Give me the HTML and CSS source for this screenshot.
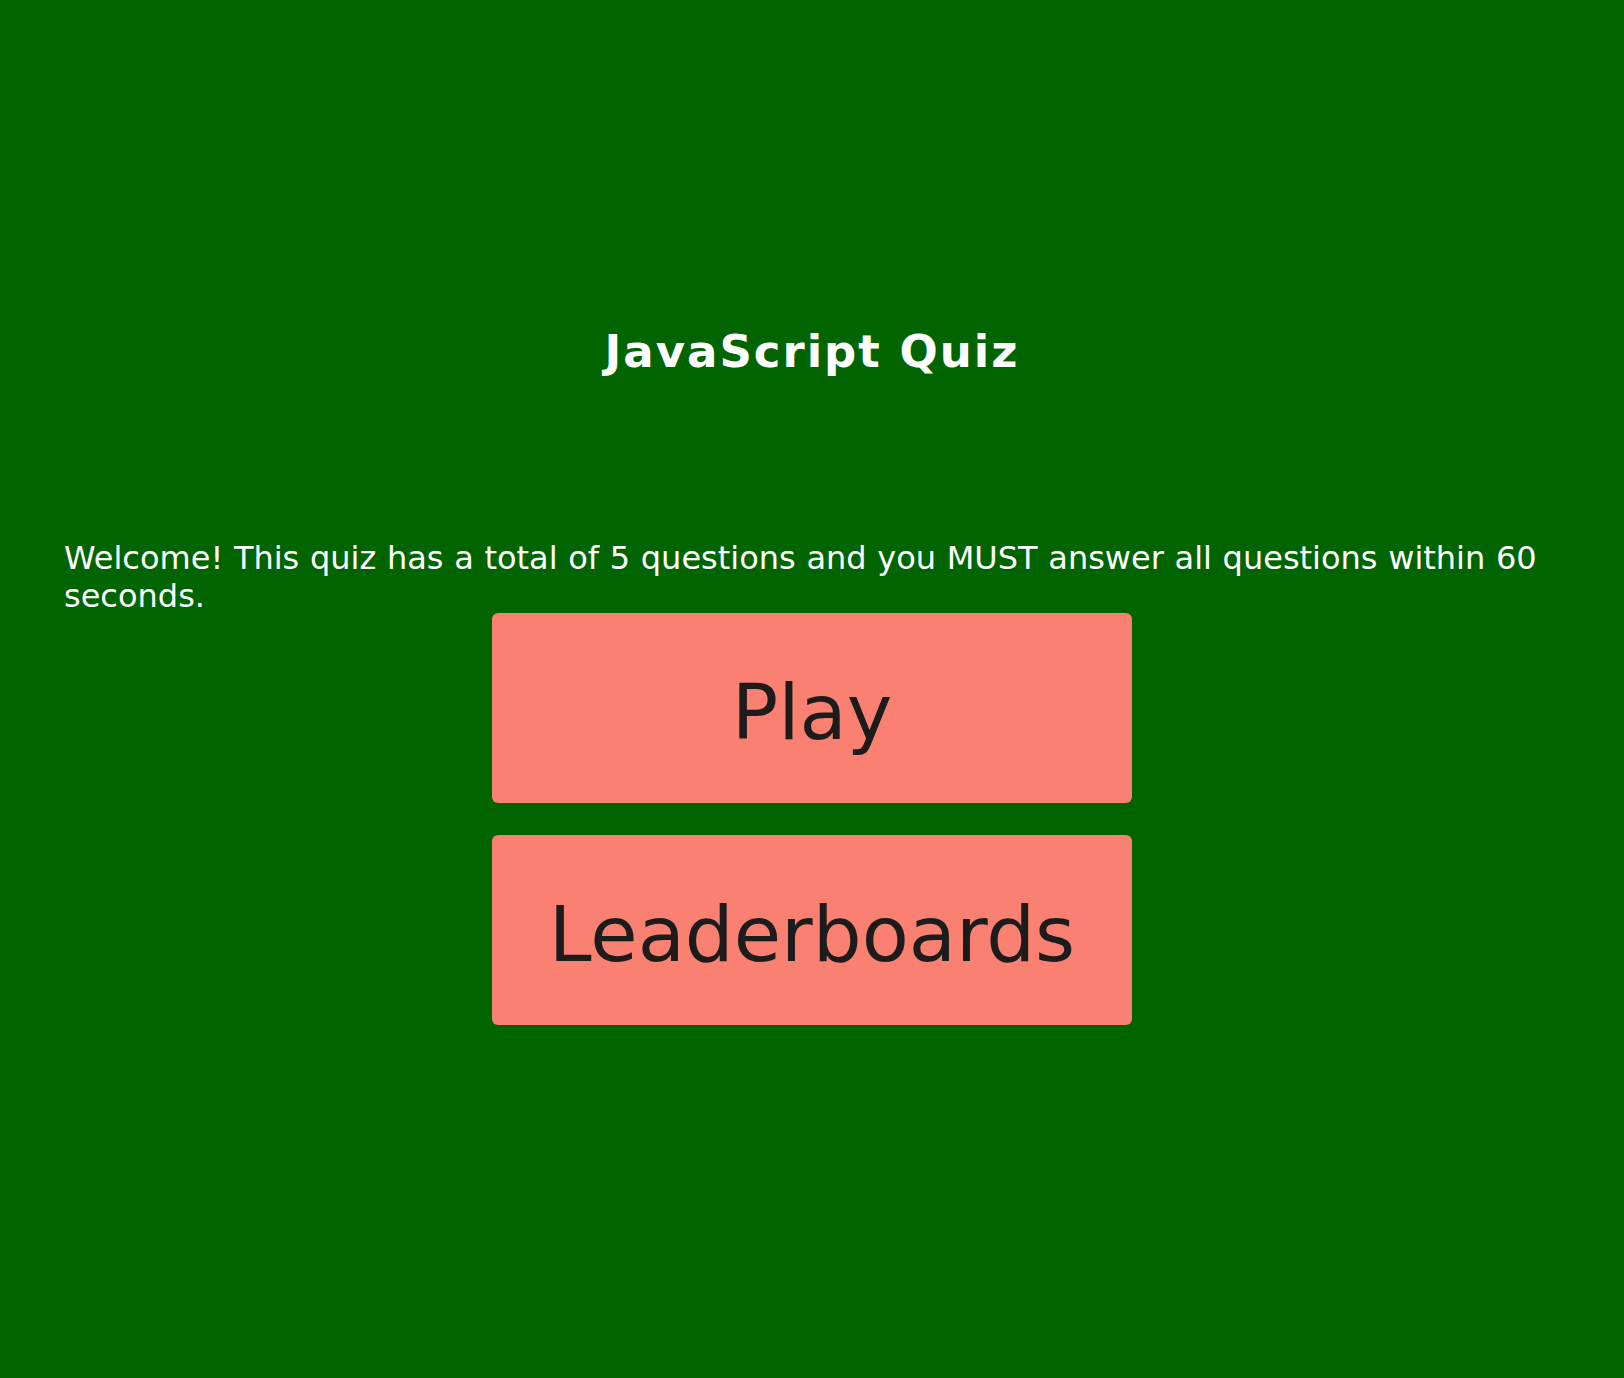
FILE: index.html
```html
<!DOCTYPE html>
<html lang="en">
<head>
<meta charset="utf-8">
<title>JavaScript Quiz</title>
<link rel="stylesheet" href="styles.css">
</head>
<body>
<main class="page">
  <h1 class="title">JavaScript Quiz</h1>
  <p class="intro">Welcome! This quiz has a total of 5 questions and you MUST answer all questions within 60 seconds.</p>
  <div class="actions">
    <button class="btn" type="button">Play</button>
    <button class="btn" type="button">Leaderboards</button>
  </div>
</main>
</body>
</html>
```

FILE: styles.css
```css
html, body {
  margin: 0;
  padding: 0;
}

body {
  background: darkgreen;
  color: #ffffff;
  font-family: "DejaVu Sans", Verdana, sans-serif;
  min-height: 1378px;
}

.page {
  display: flex;
  flex-direction: column;
  padding: 325px 64px 0 64px;
}

.title {
  margin: 0;
  text-align: center;
  font-size: 45px;
  font-weight: bold;
  letter-spacing: 2px;
  line-height: normal;
}

.intro {
  margin: 161px 0 -2px 0;
  font-size: 32px;
  word-spacing: 0.5px;
  line-height: normal;
}

.actions {
  display: flex;
  flex-direction: column;
  align-items: center;
  gap: 32px;
}

.btn {
  width: 640px;
  height: 190px;
  border: none;
  border-radius: 6px;
  background: #fa8072;
  color: #1c1c1c;
  font-family: "DejaVu Sans", Verdana, sans-serif;
  font-size: 77px;
  line-height: normal;
  padding: 9px 0 0 0;
  display: flex;
  align-items: center;
  justify-content: center;
}
```
